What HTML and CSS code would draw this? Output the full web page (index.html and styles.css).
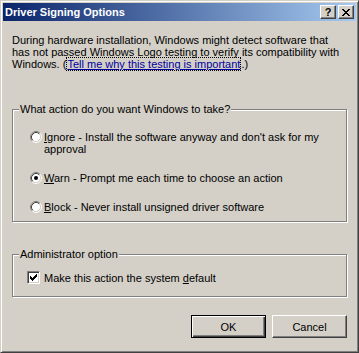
FILE: index.html
```html
<!DOCTYPE html>
<html lang="en">
<head>
    <meta charset="UTF-8">
    <title>Driver Signing Options</title>
    <link rel="stylesheet" href="styles.css">
</head>
<body>

<div class="window">
    <div class="titlebar">
        <span class="title">Driver Signing Options</span>
        <div class="caption-buttons">
            <span class="caption-btn help">?</span>
            <span class="caption-btn close">
                <svg width="8" height="7" viewBox="0 0 8 7" shape-rendering="crispEdges">
                    <path fill="#000" d="M0 0h2v1H0z M6 0h2v1H6z M1 1h2v1H1z M5 1h2v1H5z M2 2h4v1H2z M3 3h2v1H3z M2 4h4v1H2z M1 5h2v1H1z M5 5h2v1H5z M0 6h2v1H0z M6 6h2v1H6z"/>
                </svg>
            </span>
        </div>
    </div>

    <div class="content">
        <p class="intro">During hardware installation, Windows might detect software that<br>has not passed Windows Logo testing to verify its compatibility with<br>Windows. (<a href="#" class="link">Tell me why this testing is important</a>.)</p>

        <fieldset class="group">
            <legend>What action do you want Windows to take?</legend>
            <div class="group-body radio-list">
                <div class="radio-row">
                    <svg class="radio" width="12" height="12" viewBox="0 0 12 12">
                        <circle cx="6" cy="6" r="4.5" fill="#fff"/>
                        <path d="M2.11 9.89A5.5 5.5 0 0 1 9.89 2.11" fill="none" stroke="#808080"/>
                        <path d="M9.89 2.11A5.5 5.5 0 0 1 2.11 9.89" fill="none" stroke="#fff"/>
                        <path d="M2.82 9.18A4.5 4.5 0 0 1 9.18 2.82" fill="none" stroke="#404040"/>
                        <path d="M9.18 2.82A4.5 4.5 0 0 1 2.82 9.18" fill="none" stroke="#d4d0c8"/>
                    </svg>
                    <span><u>I</u>gnore - Install the software anyway and don't ask for my<br>approval</span>
                </div>
                <div class="radio-row">
                    <svg class="radio" width="12" height="12" viewBox="0 0 12 12">
                        <circle cx="6" cy="6" r="4.5" fill="#fff"/>
                        <path d="M2.11 9.89A5.5 5.5 0 0 1 9.89 2.11" fill="none" stroke="#808080"/>
                        <path d="M9.89 2.11A5.5 5.5 0 0 1 2.11 9.89" fill="none" stroke="#fff"/>
                        <path d="M2.82 9.18A4.5 4.5 0 0 1 9.18 2.82" fill="none" stroke="#404040"/>
                        <path d="M9.18 2.82A4.5 4.5 0 0 1 2.82 9.18" fill="none" stroke="#d4d0c8"/>
                        <circle cx="6" cy="6" r="2" fill="#000"/>
                    </svg>
                    <span><u>W</u>arn - Prompt me each time to choose an action</span>
                </div>
                <div class="radio-row">
                    <svg class="radio" width="12" height="12" viewBox="0 0 12 12">
                        <circle cx="6" cy="6" r="4.5" fill="#fff"/>
                        <path d="M2.11 9.89A5.5 5.5 0 0 1 9.89 2.11" fill="none" stroke="#808080"/>
                        <path d="M9.89 2.11A5.5 5.5 0 0 1 2.11 9.89" fill="none" stroke="#fff"/>
                        <path d="M2.82 9.18A4.5 4.5 0 0 1 9.18 2.82" fill="none" stroke="#404040"/>
                        <path d="M9.18 2.82A4.5 4.5 0 0 1 2.82 9.18" fill="none" stroke="#d4d0c8"/>
                    </svg>
                    <span><u>B</u>lock - Never install unsigned driver software</span>
                </div>
            </div>
        </fieldset>

        <fieldset class="group group-admin">
            <legend>Administrator option</legend>
            <div class="group-body admin-body">
                <div class="check-row">
                    <span class="checkbox">
                        <svg width="9" height="9" viewBox="2 2 9 9" shape-rendering="crispEdges">
                            <polygon points="3,5 5,7 9,3 10,3 10,5 5,10 3,8" fill="#000"/>
                        </svg>
                    </span>
                    <span>Make this action the system <u>d</u>efault</span>
                </div>
            </div>
        </fieldset>

        <div class="buttons">
            <button class="btn btn-default">OK</button>
            <button class="btn">Cancel</button>
        </div>
    </div>
</div>

</body>
</html>
```

FILE: styles.css
```css
body {
    margin: 0;
    font-family: "Liberation Sans", Arial, sans-serif;
    font-size: 11px;
    line-height: 12px;
    color: #000;
}

.window {
    width: 359px;
    height: 353px;
    box-sizing: border-box;
    background-color: #d4d0c8;
    border: 1px solid;
    border-color: #d4d0c8 #404040 #404040 #d4d0c8;
    box-shadow: inset 1px 1px 0 #fff, inset -1px -1px 0 #808080;
    padding: 2px;
}

.titlebar {
    display: flex;
    align-items: center;
    justify-content: space-between;
    height: 18px;
    padding: 0 2px;
    background: linear-gradient(to right, #0a246a, #a6caf0);
}

.title {
    color: #fff;
    font-weight: bold;
}

.caption-buttons {
    display: flex;
    gap: 2px;
}

.caption-btn {
    display: flex;
    align-items: center;
    justify-content: center;
    width: 16px;
    height: 14px;
    box-sizing: border-box;
    background-color: #d4d0c8;
    border: 1px solid;
    border-color: #fff #404040 #404040 #fff;
    box-shadow: inset -1px -1px 0 #808080;
    font-weight: bold;
    font-size: 11px;
    line-height: 12px;
}

.content {
    padding: 13px 9px 0 9px;
}

.intro {
    margin: 0 0 33px 0;
}

.link {
    color: #0000a0;
    text-decoration: underline;
    border: 1px dotted #000;
}

.group {
    margin: 0;
    padding: 0;
    min-width: 0;
    border: 1px solid #808080;
    box-shadow: inset 1px 1px 0 #fff, 1px 1px 0 #fff;
}

.group legend {
    margin-left: 6px;
    padding: 0 1px;
    background-color: #d4d0c8;
    line-height: 12px;
}

.radio-list {
    display: flex;
    flex-direction: column;
    gap: 17px;
    padding: 16px 0 8px 17px;
}

.radio-row {
    display: flex;
    align-items: flex-start;
}

.radio {
    flex: none;
    margin: 0 2px 0 0;
}

.group-admin {
    margin-top: 26px;
}

.admin-body {
    padding: 11px 0 12px 14px;
}

.check-row {
    display: flex;
    align-items: center;
    gap: 4px;
}

.checkbox {
    display: flex;
    align-items: center;
    justify-content: center;
    width: 13px;
    height: 13px;
    box-sizing: border-box;
    background-color: #fff;
    border: 1px solid;
    border-color: #808080 #fff #fff #808080;
    box-shadow: inset 1px 1px 0 #404040, inset -1px -1px 0 #d4d0c8;
}

.buttons {
    display: flex;
    justify-content: flex-end;
    gap: 6px;
    margin-top: 18px;
}

.btn {
    width: 75px;
    height: 23px;
    padding: 0;
    background-color: #d4d0c8;
    border: 1px solid;
    border-color: #fff #404040 #404040 #fff;
    box-shadow: inset -1px -1px 0 #808080;
    font-family: "Liberation Sans", Arial, sans-serif;
    font-size: 11px;
    color: #000;
}

.btn-default {
    border-color: #000;
    box-shadow: inset 1px 1px 0 #fff, inset -1px -1px 0 #404040, inset -2px -2px 0 #808080;
}
```
